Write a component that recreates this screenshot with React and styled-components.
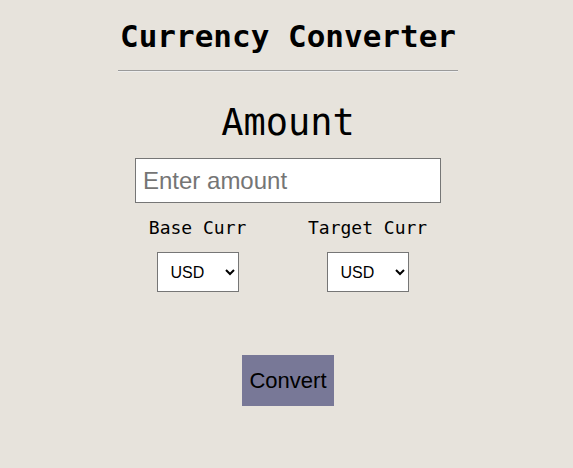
import { useState } from 'react'
import styled, { createGlobalStyle } from 'styled-components'

const GlobalStyle = createGlobalStyle`
  body {
    margin: 0;
    padding-left: 3px;
    background-color: #e7e3dc;
    font-family: "DejaVu Sans Mono", monospace;
  }
`
const Wrapper = styled.div`
  width: 340px;
  margin: 0 auto;
  padding-top: 18px;
  display: flex;
  flex-direction: column;
  align-items: center;
`
const Title = styled.h1`
  margin: 0;
  font-size: 31px;
  line-height: 36px;
  font-weight: bold;
  color: #000;
`
const Divider = styled.hr`
  width: 100%;
  margin: 16px 0 0;
  border: none;
  border-top: 1px solid #9a9a9a;
  border-bottom: 1px solid #eeeeee;
`
const Heading = styled.h2`
  margin: 29px 0 0;
  font-size: 37px;
  line-height: 43px;
  font-weight: normal;
`
const AmountInput = styled.input`
  box-sizing: border-box;
  margin-top: 14px;
  width: 306px;
  height: 45px;
  padding: 0 7px;
  border: 1px solid #767676;
  border-radius: 0;
  background: #fff;
  font-family: "Liberation Sans", Arial, sans-serif;
  font-size: 24px;
  &::placeholder {
    color: #757575;
  }
`
const Row = styled.div`
  width: 100%;
  margin-top: 14px;
  display: flex;
  justify-content: space-around;
`
const Group = styled.div`
  display: flex;
  flex-direction: column;
  align-items: center;
`
const Label = styled.label`
  font-size: 18px;
  line-height: 21px;
`
const Select = styled.select`
  box-sizing: border-box;
  margin-top: 14px;
  width: 82px;
  height: 40px;
  padding: 0 6px 0 9px;
  border: 1px solid #767676;
  border-radius: 0;
  background-color: #fff;
  font-family: "Liberation Sans", Arial, sans-serif;
  font-size: 16px;
  color: #000;
`
const Button = styled.button`
  margin-top: 63px;
  width: 92px;
  height: 51px;
  border: none;
  background-color: #787897;
  color: #000;
  font-family: "Liberation Sans", Arial, sans-serif;
  font-size: 22px;
  cursor: pointer;
`

const currencies = ['USD', 'EUR', 'GBP', 'JPY', 'INR']

export default function App() {
  const [amount, setAmount] = useState('')
  const [base, setBase] = useState('USD')
  const [target, setTarget] = useState('USD')

  return (
    <>
      <GlobalStyle />
      <Wrapper>
        <Title>Currency Converter</Title>
        <Divider />
        <Heading>Amount</Heading>
        <AmountInput
          type='text'
          placeholder='Enter amount'
          value={amount}
          onChange={e => setAmount(e.target.value)}
        />
        <Row>
          <Group>
            <Label>Base Curr</Label>
            <Select value={base} onChange={e => setBase(e.target.value)}>
              {currencies.map(c => <option key={c}>{c}</option>)}
            </Select>
          </Group>
          <Group>
            <Label>Target Curr</Label>
            <Select value={target} onChange={e => setTarget(e.target.value)}>
              {currencies.map(c => <option key={c}>{c}</option>)}
            </Select>
          </Group>
        </Row>
        <Button>Convert</Button>
      </Wrapper>
    </>
  )
}
